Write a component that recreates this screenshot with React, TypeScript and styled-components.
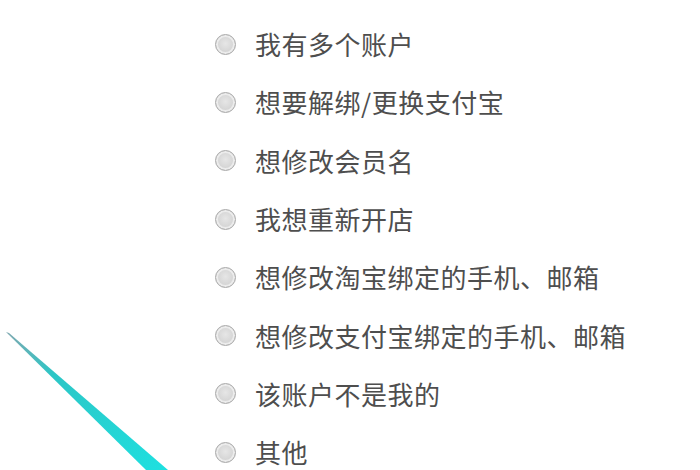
import styled, { createGlobalStyle } from "styled-components";

const GlobalStyle = createGlobalStyle`
  html, body {
    margin: 0;
    padding: 0;
    background: #ffffff;
  }
  body {
    font-family: "Noto Sans CJK SC", "Noto Sans", sans-serif;
  }
`;

const Page = styled.div`
  position: relative;
  width: 700px;
  height: 470px;
  overflow: hidden;
  background: #ffffff;
`;

const OptionList = styled.ul`
  list-style: none;
  margin: 0;
  padding: 15px 0 0 215px;
  display: flex;
  flex-direction: column;
`;

const Option = styled.li`
  height: 58.3px;
  display: flex;
  align-items: center;
  gap: 19px;
`;

const Radio = styled.span`
  box-sizing: border-box;
  width: 21px;
  height: 21px;
  flex: none;
  border-radius: 50%;
  border: 1px solid #a9a9a9;
  background: radial-gradient(circle at 50% 45%, #e6e6e6 0%, #d6d6d6 55%, #c2c2c2 100%);
  box-shadow: inset 0 0 0 2px #ececec;
`;

const Label = styled.span`
  font-size: 26px;
  line-height: 1;
  color: #4e4e4e;
  letter-spacing: 0.5px;
  white-space: nowrap;
`;

const Streak = styled.svg`
  position: absolute;
  left: 0;
  top: 320px;
  width: 200px;
  height: 150px;
  pointer-events: none;
`;

const options = [
  "我有多个账户",
  "想要解绑/更换支付宝",
  "想修改会员名",
  "我想重新开店",
  "想修改淘宝绑定的手机、邮箱",
  "想修改支付宝绑定的手机、邮箱",
  "该账户不是我的",
  "其他",
];

export default function App() {
  return (
    <Page>
      <GlobalStyle />
      <OptionList>
        {options.map((text) => (
          <Option key={text}>
            <Radio />
            <Label>{text}</Label>
          </Option>
        ))}
      </OptionList>
      <Streak viewBox="0 0 200 150">
        <defs>
          <linearGradient id="streak" x1="0" y1="0" x2="1" y2="1">
            <stop offset="0" stopColor="#7fa8b0" />
            <stop offset="0.3" stopColor="#2cc6c6" />
            <stop offset="1" stopColor="#1ee0e0" />
          </linearGradient>
        </defs>
        <polygon points="6,12 9,13 168,150 146,150" fill="url(#streak)" />
      </Streak>
    </Page>
  );
}
